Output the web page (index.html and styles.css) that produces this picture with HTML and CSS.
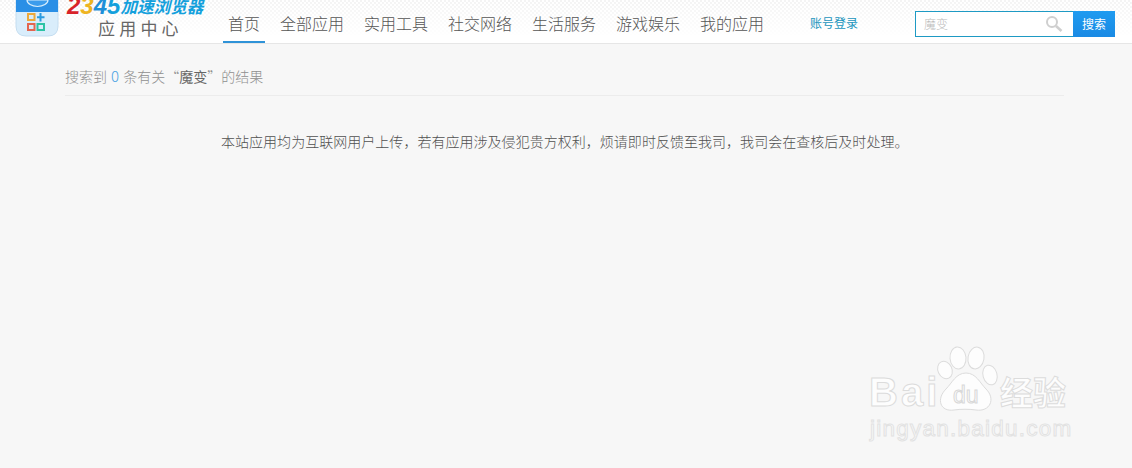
FILE: index.html
```html
<!DOCTYPE html>
<html lang="zh">
<head>
<meta charset="utf-8">
<title>应用中心</title>
<link rel="stylesheet" href="styles.css">
</head>
<body>
<header class="header">
  <svg class="app-icon" width="44" height="37" viewBox="0 0 44 37">
    <path d="M1 0H43V26Q43 36 33 36H11Q1 36 1 26Z" fill="#d9edfb" stroke="#c4ddf0"/>
    <path d="M1 0H43V12H1Z" fill="#2a8fe6"/>
    <path d="M12 0A10.5 6.5 0 0 0 33 0Z" fill="#3c9cec" stroke="#d6ecfb" stroke-width="1.2"/>
    <rect x="13" y="14" width="6.5" height="6" fill="none" stroke="#eda93a" stroke-width="2"/>
    <path d="M25.5 13V21.5M22 17.2H29.5" stroke="#2a9ae0" stroke-width="2" fill="none"/>
    <rect x="13" y="24" width="6.5" height="6" fill="none" stroke="#e4664f" stroke-width="2"/>
    <rect x="22.5" y="24" width="6.5" height="6" fill="none" stroke="#2cc3a4" stroke-width="2"/>
  </svg>
  <div class="brand">
    <div class="brand-top"><span class="d-red">2</span><span class="d-yellow">3</span><span class="d-blue">4</span><span class="d-cyan">5</span><span class="brand-name">加速浏览器</span></div>
    <div class="brand-sub">应用中心</div>
  </div>
  <nav class="nav">
    <a class="nav-item active">首页</a>
    <a class="nav-item">全部应用</a>
    <a class="nav-item">实用工具</a>
    <a class="nav-item">社交网络</a>
    <a class="nav-item">生活服务</a>
    <a class="nav-item">游戏娱乐</a>
    <a class="nav-item">我的应用</a>
  </nav>
  <a class="login">账号登录</a>
  <form class="search">
    <div class="search-box">
      <span class="search-text">魔变</span>
      <svg width="18" height="18" viewBox="0 0 18 18"><circle cx="7" cy="7" r="5" fill="none" stroke="#cfcfcf" stroke-width="2"/><path d="M11 11L16.5 16" stroke="#cfcfcf" stroke-width="2.6"/></svg>
    </div>
    <div class="search-btn">搜索</div>
  </form>
</header>
<main class="main">
  <div class="summary">搜索到 <span class="count">0</span> 条有关“<b class="term">魔变</b>”的结果</div>
  <p class="notice">本站应用均为互联网用户上传，若有应用涉及侵犯贵方权利，烦请即时反馈至我司，我司会在查核后及时处理。</p>
</main>
<svg class="watermark" width="210" height="100" viewBox="0 0 210 100">
  <g fill="#fdfdfd" stroke="#dcdcdc">
    <ellipse cx="90" cy="11" rx="8" ry="11" transform="rotate(-5 90 11)"/>
    <ellipse cx="108" cy="11" rx="8" ry="11" transform="rotate(10 108 11)"/>
    <ellipse cx="77" cy="23" rx="7" ry="9" transform="rotate(-25 77 23)"/>
    <ellipse cx="122" cy="28" rx="7" ry="10" transform="rotate(-15 122 28)"/>
    <path d="M98 26C108 26 112 36 118 42C128 52 122 65 108 63C102 62 92 62 86 63C72 65 68 52 78 42C84 36 88 26 98 26Z"/>
    <text class="wm-big" x="1" y="59">Bai</text>
    <text class="wm-du" x="85" y="56">du</text>
    <text class="wm-cn" x="132" y="58">经验</text>
    <text class="wm-url" x="2" y="89">jingyan.baidu.com</text>
  </g>
</svg>
</body>
</html>
```
FILE: styles.css
```css
* { box-sizing: border-box; }
html, body { margin: 0; padding: 0; }
body {
  height: 468px;
  overflow: hidden;
  position: relative;
  background: #f7f7f7;
  color: #666;
  font-family: "Noto Sans CJK SC", "Liberation Sans", sans-serif;
  font-weight: 300;
}
.header {
  height: 44px;
  display: flex;
  align-items: flex-start;
  padding-left: 15px;
  overflow: hidden;
  border-bottom: 1px solid #e6e6e6;
  background:
    linear-gradient(rgba(255,255,255,0), #fff 85%),
    repeating-conic-gradient(#fff 0 25%, #f4f4f4 0 50%) 0 0 / 4px 4px;
}
.app-icon { flex: none; width: 44px; height: 37px; }
.brand { width: 161px; margin-left: 8px; flex: none; }
.brand-top {
  height: 18px;
  margin-top: -3px;
  font: italic 700 24px/18px "Liberation Sans", sans-serif;
  white-space: nowrap;
  display: flex;
}
.d-red { color: #d8232a; }
.d-yellow { color: #eeb422; }
.d-blue { color: #1f8fd8; }
.d-cyan { color: #14a0dc; }
.brand-name {
  color: #14a0dc;
  font: italic 700 16.6px/18px "Noto Sans CJK SC", sans-serif;
}
.brand-sub {
  margin: 3px 0 0 31px;
  font-size: 17px;
  line-height: 20px;
  font-weight: 400;
  letter-spacing: 4.2px;
  color: #666;
  white-space: nowrap;
}
.nav { display: flex; gap: 20px; flex: none; }
.nav-item {
  position: relative;
  height: 43px;
  font-size: 16px;
  line-height: 47px;
  color: #555;
  white-space: nowrap;
  font-weight: 300;
}
.active::after {
  content: "";
  position: absolute;
  left: -5px;
  right: -5px;
  bottom: 0;
  height: 2px;
  background: #2f93d8;
}
.login {
  margin-left: 46px;
  font-size: 12px;
  line-height: 46px;
  width: 49px;
  color: #1b95bd;
  font-weight: 400;
  white-space: nowrap;
  flex: none;
}
.search { display: flex; margin: 11px 0 0 56px; height: 26px; flex: none; }
.search-box {
  width: 158px;
  height: 26px;
  border: 1px solid #1e9ac4;
  border-right: 0;
  background: #fff;
  display: flex;
  justify-content: space-between;
  align-items: center;
  padding: 0 10px 0 8px;
}
.search-text { font-size: 12px; color: #bbb; line-height: 24px; }
.search-btn {
  width: 42px;
  height: 26px;
  background: linear-gradient(#1f9bf0, #1a8ae4);
  color: #fff;
  font-size: 12px;
  line-height: 26px;
  text-align: center;
  font-weight: 400;
}
.main { margin: 0 68px 0 65px; }
.summary {
  height: 52px;
  padding-top: 20px;
  font-size: 14px;
  line-height: 24px;
  color: #8f8f8f;
  border-bottom: 1px solid #ececec;
  font-weight: 300;
}
.count { color: #4ba3e3; font-size: 15px; margin: 0 1px; }
.term { color: #666; font-weight: 400; }
.notice {
  margin: 35px 0 0;
  padding-left: 156px;
  font-size: 14px;
  line-height: 20px;
  color: #505050;
  white-space: nowrap;
  font-weight: 300;
  letter-spacing: .03px;
}
.watermark { position: absolute; left: 868px; top: 347px; overflow: visible; }
.wm-big { font: 700 40px "Liberation Sans", sans-serif; letter-spacing: 3px; }
.wm-du { font: 400 23px "Liberation Sans", sans-serif; fill: none; stroke: #d8d8d8; }
.wm-cn { font: 700 33px "Noto Sans CJK SC", sans-serif; }
.wm-url { font: 400 22.5px "Liberation Sans", sans-serif; letter-spacing: 1.25px; fill: #fafafa; stroke: #e2e2e2; }
```
